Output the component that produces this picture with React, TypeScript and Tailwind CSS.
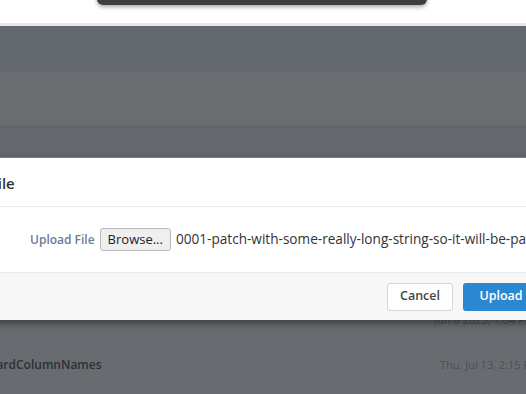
import React from "react";

export default function App() {
  const font = { fontFamily: '"Open Sans", "Noto Sans", sans-serif' };
  return (
    <div
      className="relative w-[526px] h-[394px] overflow-hidden bg-white"
      style={font}
    >
      {/* top white strip with dark toast */}
      <div className="relative h-[23px] bg-white">
        <div className="absolute left-[97px] top-[-10px] w-[330px] h-[15px] rounded-b-[6px] bg-[#3e3e3e] shadow-[0_2px_4px_rgba(0,0,0,0.35)]" />
      </div>
      <div className="h-[3px] bg-[#e9e6e4]" />

      {/* dimmed page area */}
      <div className="flex flex-col">
        <div className="h-[46px] bg-[#63686f]" />
        <div className="h-[53px] bg-[#696d70]" />
        <div className="h-[32px] bg-[#64686e]" />
        <div className="h-[1px] bg-[#8a8f94]" />

        {/* modal */}
        <div className="ml-[-80px] w-[700px] bg-white shadow-[0_3px_8px_rgba(0,0,0,0.45)] relative z-10">
          <div className="h-[49px] flex items-center border-b border-[#e8ecf0]">
            <span className="ml-[14px] mt-[2px] text-[15px] font-semibold text-[#333]">
              Upload File
            </span>
          </div>
          <div className="h-[66px] flex items-center border-b border-[#e6ebf0]">
            <span className="ml-[110px] mt-[1px] text-[12px] font-semibold text-[#6d7b98]">
              Upload File
            </span>
            <span className="ml-[5px] h-[23px] px-[7px] flex items-center border border-[#b9b9b9] rounded-[3px] bg-[#efefef] text-[13px] text-[#222]">
              Browse...
            </span>
            <span className="ml-[5px] text-[13.6px] text-[#333] whitespace-nowrap">
              0001-patch-with-some-really-long-string-so-it-will-be-pa
            </span>
          </div>
          <div className="h-[47px] bg-[#f7f7f7] flex items-center">
            <span className="ml-[467px] w-[66px] h-[28px] flex items-center justify-center border border-[#d6d6d6] rounded-[3px] bg-white text-[12.5px] font-semibold text-[#444]">
              Cancel
            </span>
            <span className="ml-[10px] w-[76px] h-[28px] flex items-center justify-center rounded-[3px] bg-[#2a88d2] text-[12.5px] font-semibold text-white">
              Upload
            </span>
          </div>
        </div>

        {/* rest of dimmed page */}
        <div className="h-[80px] bg-[#686c70] relative">
          <div className="h-[5px] overflow-hidden relative">
            <span className="absolute left-[434px] top-[-8px] text-[11px] text-[#4b4f54] whitespace-nowrap">
              Jun 8 2023, 1:04 PM
            </span>
          </div>
          <div className="mt-[31px] flex items-center justify-between">
            <span className="ml-[-37px] text-[12px] font-semibold text-[#2c3034]">
              StandardColumnNames
            </span>
            <span className="mr-[-14px] text-[11px] text-[#4c5055] whitespace-nowrap">
              Thu, Jul 13, 2:15 PM
            </span>
          </div>
        </div>
      </div>
    </div>
  );
}
